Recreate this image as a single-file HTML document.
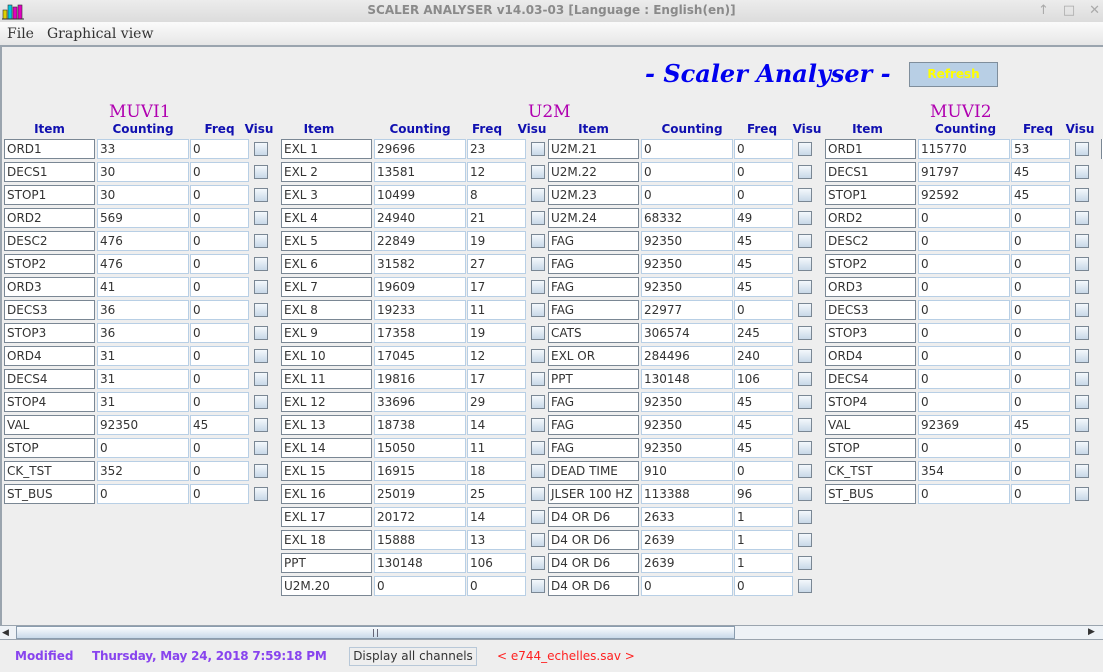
<!DOCTYPE html>
<html><head><meta charset="utf-8"><style>
*{margin:0;padding:0;box-sizing:border-box}
body{width:1103px;height:672px;overflow:hidden;background:#eeeeee;font-family:"DejaVu Sans","Liberation Sans",sans-serif;position:relative}
.tb{position:absolute;left:0;top:0;width:1103px;height:22px;background:linear-gradient(#ececec,#dcdcdc);text-align:center;font:bold 12px "DejaVu Sans",sans-serif;color:#8a8a8a;line-height:21px}
.mb{position:absolute;left:0;top:22px;width:1103px;height:25px;background:linear-gradient(#fbfbfb,#e6e6e6);border-bottom:2px solid #9aa4ae;font:14px "DejaVu Serif","Liberation Serif",serif;color:#333;line-height:25px}
.mb span{position:absolute;top:0}
.lb{position:absolute;left:0;top:47px;width:2px;height:578px;background:#9aa4ae}
.ttl{position:absolute;left:645px;top:59px;font:italic bold 24px "DejaVu Serif","Liberation Serif",serif;color:#0000ee;white-space:nowrap}
.ref{position:absolute;left:909px;top:62px;width:89px;height:25px;background:#b8cfe5;border:1px solid #7f8e9c;color:#ffff00;font:bold 12px "DejaVu Sans",sans-serif;text-align:center;line-height:23px}
.gt{position:absolute;top:102px;font:17px "DejaVu Serif","Liberation Serif",serif;color:#b000b0}
.h{position:absolute;top:122px;font:bold 12px "DejaVu Sans",sans-serif;color:#1010b0;text-align:center}
.g{position:absolute;height:20px;width:270px}
.g div{position:absolute;top:0;height:20px;background:#fff;font-size:12px;color:#333;line-height:19px;padding-left:2px;white-space:nowrap;overflow:hidden}
.g .i{left:0;width:91px;border:1px solid #7a8794}
.g .c{left:93px;width:92px;border:1px solid #b8cfe5}
.g .f{left:186px;width:59px;border:1px solid #b8cfe5}
.g .v{left:250px;top:3px;width:14px;height:14px;background:linear-gradient(#f4f8fc,#c8d8e8);border:1px solid #7a8794;padding:0}
.sb{position:absolute;left:0;top:625px;width:1103px;height:15px;background:#eef2f6;border-top:1px solid #9aa4ae;border-bottom:1px solid #9aa4ae}
.st{position:absolute;top:649px;font:bold 12px "DejaVu Sans",sans-serif;color:#8844ee;white-space:nowrap}
</style></head><body>
<div class="tb">SCALER ANALYSER v14.03-03 [Language : English(en)]</div>
<svg style="position:absolute;left:2px;top:2px" width="22" height="18"><rect x="1" y="8" width="4" height="9" fill="#e0d000" stroke="#333" stroke-width=".6"/><rect x="6" y="3" width="4" height="14" fill="#00c8e0" stroke="#333" stroke-width=".6"/><rect x="11" y="5" width="4" height="12" fill="#e000c0" stroke="#333" stroke-width=".6"/><rect x="16" y="3" width="4" height="14" fill="#e000c0" stroke="#333" stroke-width=".6"/><line x1="0" y1="17" x2="22" y2="17" stroke="#333"/></svg>
<div style="position:absolute;left:1038px;top:3px;color:#aaa;font-size:13px;letter-spacing:14px">↑□✕</div>
<div class="mb"><span style="left:7px">File</span><span style="left:47px">Graphical view</span></div>
<div class="lb"></div>
<div class="ttl">- Scaler Analyser -</div>
<div class="ref">Refresh</div>
<div class="gt" style="left:109px">MUVI1</div>
<div class="gt" style="left:528px">U2M</div>
<div class="gt" style="left:930px">MUVI2</div>

<div class="h" style="left:4px;width:91px">Item</div><div class="h" style="left:97px;width:92px">Counting</div><div class="h" style="left:190px;width:59px">Freq</div><div class="h" style="left:240px;width:38px">Visu</div>
<div class="h" style="left:281px;width:76px">Item</div><div class="h" style="left:374px;width:92px">Counting</div><div class="h" style="left:467px;width:40px">Freq</div><div class="h" style="left:513px;width:38px">Visu</div>
<div class="h" style="left:548px;width:91px">Item</div><div class="h" style="left:641px;width:102px">Counting</div><div class="h" style="left:734px;width:56px">Freq</div><div class="h" style="left:788px;width:38px">Visu</div>
<div class="h" style="left:825px;width:85px">Item</div><div class="h" style="left:918px;width:95px">Counting</div><div class="h" style="left:1011px;width:54px">Freq</div><div class="h" style="left:1061px;width:38px">Visu</div>

<div class="g" style="left:4px;top:139px"><div class="i">ORD1</div><div class="c">33</div><div class="f">0</div><div class="v"></div></div>
<div class="g" style="left:4px;top:162px"><div class="i">DECS1</div><div class="c">30</div><div class="f">0</div><div class="v"></div></div>
<div class="g" style="left:4px;top:185px"><div class="i">STOP1</div><div class="c">30</div><div class="f">0</div><div class="v"></div></div>
<div class="g" style="left:4px;top:208px"><div class="i">ORD2</div><div class="c">569</div><div class="f">0</div><div class="v"></div></div>
<div class="g" style="left:4px;top:231px"><div class="i">DESC2</div><div class="c">476</div><div class="f">0</div><div class="v"></div></div>
<div class="g" style="left:4px;top:254px"><div class="i">STOP2</div><div class="c">476</div><div class="f">0</div><div class="v"></div></div>
<div class="g" style="left:4px;top:277px"><div class="i">ORD3</div><div class="c">41</div><div class="f">0</div><div class="v"></div></div>
<div class="g" style="left:4px;top:300px"><div class="i">DECS3</div><div class="c">36</div><div class="f">0</div><div class="v"></div></div>
<div class="g" style="left:4px;top:323px"><div class="i">STOP3</div><div class="c">36</div><div class="f">0</div><div class="v"></div></div>
<div class="g" style="left:4px;top:346px"><div class="i">ORD4</div><div class="c">31</div><div class="f">0</div><div class="v"></div></div>
<div class="g" style="left:4px;top:369px"><div class="i">DECS4</div><div class="c">31</div><div class="f">0</div><div class="v"></div></div>
<div class="g" style="left:4px;top:392px"><div class="i">STOP4</div><div class="c">31</div><div class="f">0</div><div class="v"></div></div>
<div class="g" style="left:4px;top:415px"><div class="i">VAL</div><div class="c">92350</div><div class="f">45</div><div class="v"></div></div>
<div class="g" style="left:4px;top:438px"><div class="i">STOP</div><div class="c">0</div><div class="f">0</div><div class="v"></div></div>
<div class="g" style="left:4px;top:461px"><div class="i">CK_TST</div><div class="c">352</div><div class="f">0</div><div class="v"></div></div>
<div class="g" style="left:4px;top:484px"><div class="i">ST_BUS</div><div class="c">0</div><div class="f">0</div><div class="v"></div></div>

<div class="g" style="left:281px;top:139px"><div class="i">EXL 1</div><div class="c">29696</div><div class="f">23</div><div class="v"></div></div>
<div class="g" style="left:281px;top:162px"><div class="i">EXL 2</div><div class="c">13581</div><div class="f">12</div><div class="v"></div></div>
<div class="g" style="left:281px;top:185px"><div class="i">EXL 3</div><div class="c">10499</div><div class="f">8</div><div class="v"></div></div>
<div class="g" style="left:281px;top:208px"><div class="i">EXL 4</div><div class="c">24940</div><div class="f">21</div><div class="v"></div></div>
<div class="g" style="left:281px;top:231px"><div class="i">EXL 5</div><div class="c">22849</div><div class="f">19</div><div class="v"></div></div>
<div class="g" style="left:281px;top:254px"><div class="i">EXL 6</div><div class="c">31582</div><div class="f">27</div><div class="v"></div></div>
<div class="g" style="left:281px;top:277px"><div class="i">EXL 7</div><div class="c">19609</div><div class="f">17</div><div class="v"></div></div>
<div class="g" style="left:281px;top:300px"><div class="i">EXL 8</div><div class="c">19233</div><div class="f">11</div><div class="v"></div></div>
<div class="g" style="left:281px;top:323px"><div class="i">EXL 9</div><div class="c">17358</div><div class="f">19</div><div class="v"></div></div>
<div class="g" style="left:281px;top:346px"><div class="i">EXL 10</div><div class="c">17045</div><div class="f">12</div><div class="v"></div></div>
<div class="g" style="left:281px;top:369px"><div class="i">EXL 11</div><div class="c">19816</div><div class="f">17</div><div class="v"></div></div>
<div class="g" style="left:281px;top:392px"><div class="i">EXL 12</div><div class="c">33696</div><div class="f">29</div><div class="v"></div></div>
<div class="g" style="left:281px;top:415px"><div class="i">EXL 13</div><div class="c">18738</div><div class="f">14</div><div class="v"></div></div>
<div class="g" style="left:281px;top:438px"><div class="i">EXL 14</div><div class="c">15050</div><div class="f">11</div><div class="v"></div></div>
<div class="g" style="left:281px;top:461px"><div class="i">EXL 15</div><div class="c">16915</div><div class="f">18</div><div class="v"></div></div>
<div class="g" style="left:281px;top:484px"><div class="i">EXL 16</div><div class="c">25019</div><div class="f">25</div><div class="v"></div></div>
<div class="g" style="left:281px;top:507px"><div class="i">EXL 17</div><div class="c">20172</div><div class="f">14</div><div class="v"></div></div>
<div class="g" style="left:281px;top:530px"><div class="i">EXL 18</div><div class="c">15888</div><div class="f">13</div><div class="v"></div></div>
<div class="g" style="left:281px;top:553px"><div class="i">PPT</div><div class="c">130148</div><div class="f">106</div><div class="v"></div></div>
<div class="g" style="left:281px;top:576px"><div class="i">U2M.20</div><div class="c">0</div><div class="f">0</div><div class="v"></div></div>

<div class="g" style="left:548px;top:139px"><div class="i">U2M.21</div><div class="c">0</div><div class="f">0</div><div class="v"></div></div>
<div class="g" style="left:548px;top:162px"><div class="i">U2M.22</div><div class="c">0</div><div class="f">0</div><div class="v"></div></div>
<div class="g" style="left:548px;top:185px"><div class="i">U2M.23</div><div class="c">0</div><div class="f">0</div><div class="v"></div></div>
<div class="g" style="left:548px;top:208px"><div class="i">U2M.24</div><div class="c">68332</div><div class="f">49</div><div class="v"></div></div>
<div class="g" style="left:548px;top:231px"><div class="i">FAG</div><div class="c">92350</div><div class="f">45</div><div class="v"></div></div>
<div class="g" style="left:548px;top:254px"><div class="i">FAG</div><div class="c">92350</div><div class="f">45</div><div class="v"></div></div>
<div class="g" style="left:548px;top:277px"><div class="i">FAG</div><div class="c">92350</div><div class="f">45</div><div class="v"></div></div>
<div class="g" style="left:548px;top:300px"><div class="i">FAG</div><div class="c">22977</div><div class="f">0</div><div class="v"></div></div>
<div class="g" style="left:548px;top:323px"><div class="i">CATS</div><div class="c">306574</div><div class="f">245</div><div class="v"></div></div>
<div class="g" style="left:548px;top:346px"><div class="i">EXL OR</div><div class="c">284496</div><div class="f">240</div><div class="v"></div></div>
<div class="g" style="left:548px;top:369px"><div class="i">PPT</div><div class="c">130148</div><div class="f">106</div><div class="v"></div></div>
<div class="g" style="left:548px;top:392px"><div class="i">FAG</div><div class="c">92350</div><div class="f">45</div><div class="v"></div></div>
<div class="g" style="left:548px;top:415px"><div class="i">FAG</div><div class="c">92350</div><div class="f">45</div><div class="v"></div></div>
<div class="g" style="left:548px;top:438px"><div class="i">FAG</div><div class="c">92350</div><div class="f">45</div><div class="v"></div></div>
<div class="g" style="left:548px;top:461px"><div class="i">DEAD TIME</div><div class="c">910</div><div class="f">0</div><div class="v"></div></div>
<div class="g" style="left:548px;top:484px"><div class="i">JLSER 100 HZ</div><div class="c">113388</div><div class="f">96</div><div class="v"></div></div>
<div class="g" style="left:548px;top:507px"><div class="i">D4 OR D6</div><div class="c">2633</div><div class="f">1</div><div class="v"></div></div>
<div class="g" style="left:548px;top:530px"><div class="i">D4 OR D6</div><div class="c">2639</div><div class="f">1</div><div class="v"></div></div>
<div class="g" style="left:548px;top:553px"><div class="i">D4 OR D6</div><div class="c">2639</div><div class="f">1</div><div class="v"></div></div>
<div class="g" style="left:548px;top:576px"><div class="i">D4 OR D6</div><div class="c">0</div><div class="f">0</div><div class="v"></div></div>

<div class="g" style="left:825px;top:139px"><div class="i">ORD1</div><div class="c">115770</div><div class="f">53</div><div class="v"></div></div>
<div class="g" style="left:825px;top:162px"><div class="i">DECS1</div><div class="c">91797</div><div class="f">45</div><div class="v"></div></div>
<div class="g" style="left:825px;top:185px"><div class="i">STOP1</div><div class="c">92592</div><div class="f">45</div><div class="v"></div></div>
<div class="g" style="left:825px;top:208px"><div class="i">ORD2</div><div class="c">0</div><div class="f">0</div><div class="v"></div></div>
<div class="g" style="left:825px;top:231px"><div class="i">DESC2</div><div class="c">0</div><div class="f">0</div><div class="v"></div></div>
<div class="g" style="left:825px;top:254px"><div class="i">STOP2</div><div class="c">0</div><div class="f">0</div><div class="v"></div></div>
<div class="g" style="left:825px;top:277px"><div class="i">ORD3</div><div class="c">0</div><div class="f">0</div><div class="v"></div></div>
<div class="g" style="left:825px;top:300px"><div class="i">DECS3</div><div class="c">0</div><div class="f">0</div><div class="v"></div></div>
<div class="g" style="left:825px;top:323px"><div class="i">STOP3</div><div class="c">0</div><div class="f">0</div><div class="v"></div></div>
<div class="g" style="left:825px;top:346px"><div class="i">ORD4</div><div class="c">0</div><div class="f">0</div><div class="v"></div></div>
<div class="g" style="left:825px;top:369px"><div class="i">DECS4</div><div class="c">0</div><div class="f">0</div><div class="v"></div></div>
<div class="g" style="left:825px;top:392px"><div class="i">STOP4</div><div class="c">0</div><div class="f">0</div><div class="v"></div></div>
<div class="g" style="left:825px;top:415px"><div class="i">VAL</div><div class="c">92369</div><div class="f">45</div><div class="v"></div></div>
<div class="g" style="left:825px;top:438px"><div class="i">STOP</div><div class="c">0</div><div class="f">0</div><div class="v"></div></div>
<div class="g" style="left:825px;top:461px"><div class="i">CK_TST</div><div class="c">354</div><div class="f">0</div><div class="v"></div></div>
<div class="g" style="left:825px;top:484px"><div class="i">ST_BUS</div><div class="c">0</div><div class="f">0</div><div class="v"></div></div>
<div style="position:absolute;left:1101px;top:139px;width:2px;height:20px;border-left:1px solid #7a8794;background:#fff"></div>

<div class="sb"></div>
<div style="position:absolute;left:2px;top:627px;width:12px;height:12px;font-size:9px;color:#333;line-height:12px">◀</div>
<div style="position:absolute;left:16px;top:626px;width:719px;height:13px;background:linear-gradient(#fafcfe,#c9d9e9);border:1px solid #8a9cae"></div>
<div style="position:absolute;left:373px;top:629px;width:5px;height:8px;border-left:1px solid #667;border-right:1px solid #667"></div>
<div style="position:absolute;left:1088px;top:627px;font-size:9px;color:#333">▶</div>
<div class="st" style="left:15px">Modified</div>
<div class="st" style="left:92px;letter-spacing:-0.2px">Thursday, May 24, 2018 7:59:18 PM</div>
<div style="position:absolute;left:349px;top:647px;width:128px;height:19px;border:1px solid #b8c8d8;background:#eeeeee;font-size:12px;color:#333;text-align:center;line-height:17px">Display all channels</div>
<div class="st" style="left:497px;color:#ff2020;font-weight:normal">&lt; e744_echelles.sav &gt;</div>
</body></html>
